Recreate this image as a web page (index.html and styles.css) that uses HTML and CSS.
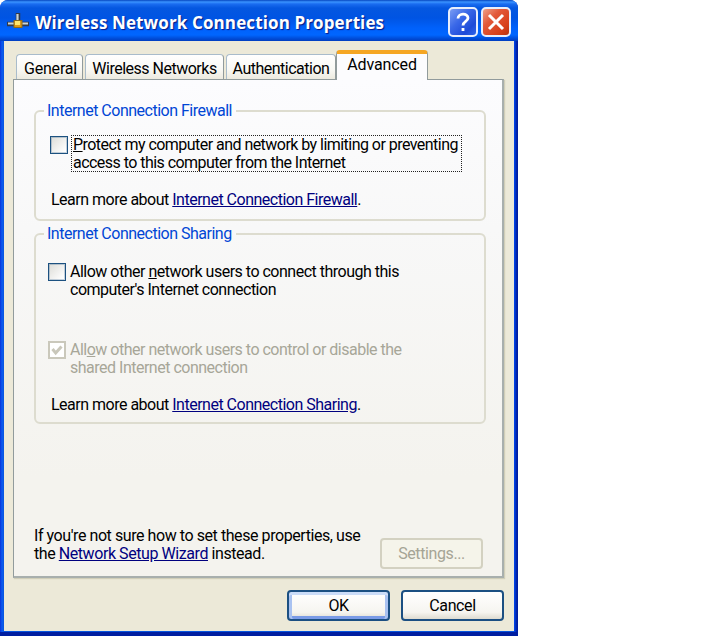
FILE: index.html
```html
<!DOCTYPE html>
<html lang="en">
<head>
    <meta charset="UTF-8">
    <meta name="viewport" content="width=device-width, initial-scale=1.0">
    <title>Wireless Network Connection Properties</title>
    <link rel="stylesheet" href="styles.css">
</head>
<body>
    <div class="window">
        <header class="title-bar">
            <svg class="title-icon" width="22" height="18" viewBox="0 0 22 18">
                <path d="M0 11h22M11 0v10" stroke="#333a48" stroke-width="4.5"/>
                <path d="M1 10.500h20M10.500 1v9" stroke="#c9d3d6" stroke-width="2.200"/>
                <rect x="7" y="7.500" width="8" height="7" fill="#dd9a16" stroke="#8a6a1c" stroke-width="1"/>
                <rect x="8" y="8" width="5" height="4" fill="#ffe66b"/>
            </svg>
            <h1>Wireless Network Connection Properties</h1>
            <button class="title-btn help" aria-label="Help">
                <svg width="26" height="26" viewBox="0 0 26 26">
                    <path d="M8 9.500C8 3.800 18 3.800 18 9C18 12.500 13 12.300 13 16.500M13 19v3" fill="none" stroke="#fff" stroke-width="2.800"/>
                </svg>
            </button>
            <button class="title-btn close" aria-label="Close">
                <svg width="26" height="26" viewBox="0 0 26 26">
                    <path d="M6 6l14 14M20 6l-14 14" stroke="#fff" stroke-width="3"/>
                </svg>
            </button>
        </header>

        <main class="content">
            <nav class="tabs">
                <a class="tab general">General</a>
                <a class="tab networks">Wireless Networks</a>
                <a class="tab auth">Authentication</a>
                <a class="tab active">Advanced</a>
            </nav>

            <div class="panel">
                <fieldset class="group firewall">
                    <legend>Internet Connection Firewall</legend>
                    <label class="option">
                        <span class="check"></span>
                        <span class="lines focus">
                            <span><u>P</u>rotect my computer and network by limiting or preventing</span>
                            <span>access to this computer from the Internet</span>
                        </span>
                    </label>
                    <p class="learn">Learn more about <a href="#">Internet Connection Firewall</a>.</p>
                </fieldset>

                <fieldset class="group sharing">
                    <legend>Internet Connection Sharing</legend>
                    <label class="option">
                        <span class="check"></span>
                        <span class="lines">
                            <span>Allow other <u>n</u>etwork users to connect through this</span>
                            <span>computer's Internet connection</span>
                        </span>
                    </label>
                    <label class="option disabled">
                        <span class="check">
                            <svg width="12" height="12" viewBox="0 0 12 12">
                                <path d="M1.500 5l3.200 4L10.500 2.500" fill="none" stroke="#c9c7ba" stroke-width="3"/>
                            </svg>
                        </span>
                        <span class="lines">
                            <span>All<u>o</u>w other network users to control or disable the</span>
                            <span>shared Internet connection</span>
                        </span>
                    </label>
                    <p class="learn">Learn more about <a href="#">Internet Connection Sharing</a>.</p>
                </fieldset>

                <div class="wizard">
                    <p class="lines">
                        <span>If you're not sure how to set these properties, use</span>
                        <span>the <a href="#">Network Setup Wizard</a> instead.</span>
                    </p>
                    <button class="btn" disabled>Settings...</button>
                </div>
            </div>

            <footer class="actions">
                <button class="btn default">OK</button>
                <button class="btn">Cancel</button>
            </footer>
        </main>
    </div>
</body>
</html>
```
FILE: styles.css
```css
* {
    margin: 0;
    padding: 0;
    box-sizing: border-box;
}

body {
    background: #fff;
    font-family: Roboto, "Liberation Sans", sans-serif;
    font-size: 16px;
    line-height: 18px;
    letter-spacing: -0.5px;
    white-space: nowrap;
    color: #000;
}

.window {
    width: 518px;
    height: 636px;
    background: linear-gradient(90deg, #0831d9 0, #0a5bf0 2px, #0855dd 4px, #0855dd 514px, #0148f0 514px, #001ea0 517px);
    border-bottom: 4px solid #001ea0;
    border-radius: 8px 8px 0 0;
    padding: 0 4px 1px;
    display: flex;
    flex-direction: column;
}

.title-bar {
    display: flex;
    align-items: center;
    height: 41px;
    margin: 0 -4px;
    padding: 3px 7px 0;
    border-radius: 8px 8px 0 0;
    background: linear-gradient(180deg, #0646c0 0, #3a93ff 2px, #1a6cf0 4px, #0557e0 8px, #0054e3 18px, #0061fb 28px, #0066ff 35px, #0050dd 38px, #003dc0 41px);
}

.title-bar h1 {
    flex: 1;
    margin-left: 6px;
    padding-top: 2px;
    font-family: "Open Sans", "Noto Sans", sans-serif;
    font-size: 17px;
    font-weight: 700;
    line-height: 24px;
    letter-spacing: 0.12px;
    color: #fff;
    text-shadow: 1px 1px 1px #0a1883;
}

.title-btn {
    width: 30px;
    height: 30px;
    margin-left: 3px;
    border: 2px solid #e8eefc;
    border-radius: 5px;
}

.title-btn svg {
    display: block;
}

.title-btn.help {
    background: linear-gradient(135deg, #7b9cf3 0, #3a68e8 40%, #1e4bd8 75%, #2f66ea 100%);
}

.title-btn.close {
    background: linear-gradient(135deg, #f0a088 0, #e2593a 35%, #d8401a 75%, #b83410 100%);
}

.content {
    flex: 1;
    background: #ece9d8;
    padding: 9px 10px 0 9px;
}

.tabs {
    display: flex;
    align-items: flex-end;
    height: 29px;
    padding-left: 3px;
}

.tab {
    height: 25px;
    padding-top: 5px;
    border: 1px solid #919b9c;
    border-color: #a9bccb #919b9c #919b9c #a9bccb;
    border-bottom: 0;
    border-radius: 4px 4px 0 0;
    background: linear-gradient(180deg, #fff 0, #f8f8f4 60%, #eceadf 100%);
    text-align: center;
}

.general {
    width: 67px;
    margin-right: 2px;
    padding-left: 2px;
    letter-spacing: -0.2px;
}

.networks {
    width: 139px;
    margin-right: 2px;
}

.auth {
    width: 110px;
}

.tab.active {
    position: relative;
    width: 92px;
    height: 30px;
    margin-bottom: -1px;
    padding-top: 2px;
    border-color: #919b9c;
    border-top: 4px solid #f5a623;
    background: #fcfcfe;
    letter-spacing: -0.1px;
}

.panel {
    height: 499px;
    padding: 22px 16px 0 20px;
    border: 1px solid #919b9c;
    border-right: 2px solid #a8afad;
    border-bottom: 2px solid #a8afad;
    background: linear-gradient(180deg, #fcfcfe 0, #f8f8f8 30%, #f4f3ee 80%, #f4f3ee 100%);
    box-shadow: 1px 1px 1px #d0ceb8;
}

.group {
    width: 452px;
    border: 2px solid #dddccf;
    border-radius: 6px;
}

legend {
    margin-left: -6px;
    padding: 0 4px 0 3px;
    color: #0046d5;
}

.firewall {
    height: 119px;
    padding: 15px 0 0 14px;
}

.sharing {
    height: 199px;
    margin-top: 4px;
    padding: 20px 0 0 12px;
}

.sharing legend {
    margin-left: -4px;
}

.option {
    display: flex;
    gap: 4px;
    height: 38px;
}

.check {
    width: 18px;
    height: 18px;
    margin-top: 1px;
    padding: 2px;
    border: 1px solid #1c5180;
    box-shadow: inset 0 0 0 1px rgba(28, 81, 128, .25);
    background: linear-gradient(135deg, #dcdcd7 0, #fff 90%);
}

.sharing .check {
    margin-top: 0;
}

.check svg {
    display: block;
}

.lines {
    display: flex;
    flex-direction: column;
}

.focus {
    width: 391px;
    height: 37px;
    margin-left: -1px;
    padding-left: 1px;
    border: 1px dotted #222;
    letter-spacing: -0.54px;
}

.option.disabled {
    margin-top: 40px;
    color: #a7a698;
}

.disabled .check {
    border: 2px solid #cac8bb;
    box-shadow: none;
    padding: 1px;
    background: #fff;
}

.learn {
    margin: 18px 0 0 1px;
}

.sharing .learn {
    margin: 17px 0 0 3px;
}

a[href] {
    color: #00007f;
    text-decoration: underline;
}

.wizard {
    display: flex;
    justify-content: space-between;
    align-items: flex-start;
    width: 449px;
    margin-top: 103px;
}

.wizard .lines {
    letter-spacing: -0.43px;
}

.btn {
    flex: none;
    width: 103px;
    height: 31px;
    border: 2px solid #1b4f82;
    border-radius: 4px;
    background: linear-gradient(180deg, #fff 0, #f6f5f0 75%, #dedbd0 100%);
    font: inherit;
    letter-spacing: -0.4px;
    color: #000;
}

.btn:disabled {
    margin-top: 11px;
    border-color: #d3d1c1;
    background: #f5f4ea;
    color: #a5a495;
}

.btn.default {
    box-shadow: inset 0 3px 0 #cbdcf8, inset 3px 0 0 #a9c2f1, inset -3px 0 0 #a9c2f1, inset 0 -3px 0 #7a9be6;
}

.actions {
    display: flex;
    justify-content: flex-end;
    gap: 11px;
    margin-top: 12px;
}
```
